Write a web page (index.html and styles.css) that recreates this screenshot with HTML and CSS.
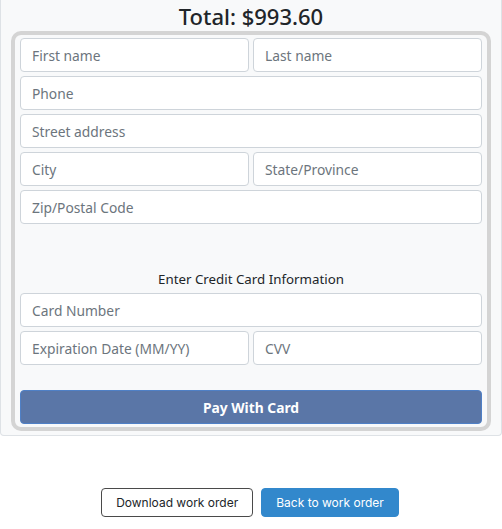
FILE: index.html
```html
<!DOCTYPE html>
<html>
<head>
<meta charset="utf-8">
<link rel="stylesheet" href="styles.css">
</head>
<body>
<div class="panel">
  <h2 class="total">Total: $993.60</h2>
  <form class="box">
    <div class="row two">
      <input class="field" placeholder="First name">
      <input class="field" placeholder="Last name">
    </div>
    <input class="field" placeholder="Phone">
    <input class="field" placeholder="Street address">
    <div class="row two">
      <input class="field" placeholder="City">
      <input class="field" placeholder="State/Province">
    </div>
    <input class="field" placeholder="Zip/Postal Code">
    <div class="label">Enter Credit Card Information</div>
    <input class="field" placeholder="Card Number">
    <div class="row two">
      <input class="field" placeholder="Expiration Date (MM/YY)">
      <input class="field" placeholder="CVV">
    </div>
    <button type="button" class="pay">Pay With Card</button>
  </form>
</div>
<div class="actions">
  <button type="button" class="btn btn-outline">Download work order</button>
  <button type="button" class="btn btn-primary">Back to work order</button>
</div>
</body>
</html>
```

FILE: styles.css
```css
html, body {
  margin: 0;
  padding: 0;
  background: #ffffff;
  font-family: "Noto Sans", "Open Sans", sans-serif;
  color: #212529;
}

.panel {
  box-sizing: border-box;
  width: 502px;
  background: #f8f9fa;
  border: 1px solid #dee2e6;
  border-top: none;
  border-radius: 0 0 4px 4px;
  padding: 2px 10px 4px 10px;
}

.total {
  margin: 0;
  text-align: center;
  font-size: 22px;
  font-weight: 500;
  line-height: 29px;
  color: #212529;
}

.box {
  box-sizing: border-box;
  width: 480px;
  margin: 0;
  border: 4px solid #d4d4d4;
  border-radius: 10px;
  padding: 3px 5px 3px 5px;
  display: flex;
  flex-direction: column;
  gap: 4px;
}

.row.two {
  display: grid;
  grid-template-columns: 1fr 1fr;
  gap: 4px;
}

.field {
  box-sizing: border-box;
  width: 100%;
  height: 34px;
  margin: 0;
  padding: 0 11px;
  border: 1px solid #ced4da;
  border-radius: 4px;
  background: #ffffff;
  font-family: "Noto Sans", "Open Sans", sans-serif;
  font-size: 13.8px;
  color: #495057;
}

.field::placeholder {
  color: #6c757d;
  opacity: 1;
}

.label {
  padding-top: 41px;
  line-height: 20px;
  font-size: 13.3px;
  text-align: center;
  color: #212529;
}

.pay {
  box-sizing: border-box;
  margin-top: 21px;
  height: 34px;
  width: 100%;
  border: 1px solid #4f80c6;
  border-radius: 4px;
  background: #5a76a7;
  color: #ffffff;
  font-family: "Noto Sans", "Open Sans", sans-serif;
  font-size: 13.8px;
  font-weight: 700;
}

.actions {
  display: flex;
  justify-content: center;
  gap: 8px;
  margin-top: 52px;
  padding-right: 2px;
}

.btn {
  box-sizing: border-box;
  height: 29px;
  padding: 0 14px;
  border-radius: 4px;
  font-family: "Inter", "Noto Sans", sans-serif;
  font-size: 12px;
}

.btn-outline {
  background: #ffffff;
  border: 1px solid #4a4a4a;
  color: #212529;
}

.btn-primary {
  background: #3288cc;
  border: 1px solid #3288cc;
  color: #ffffff;
}
```
